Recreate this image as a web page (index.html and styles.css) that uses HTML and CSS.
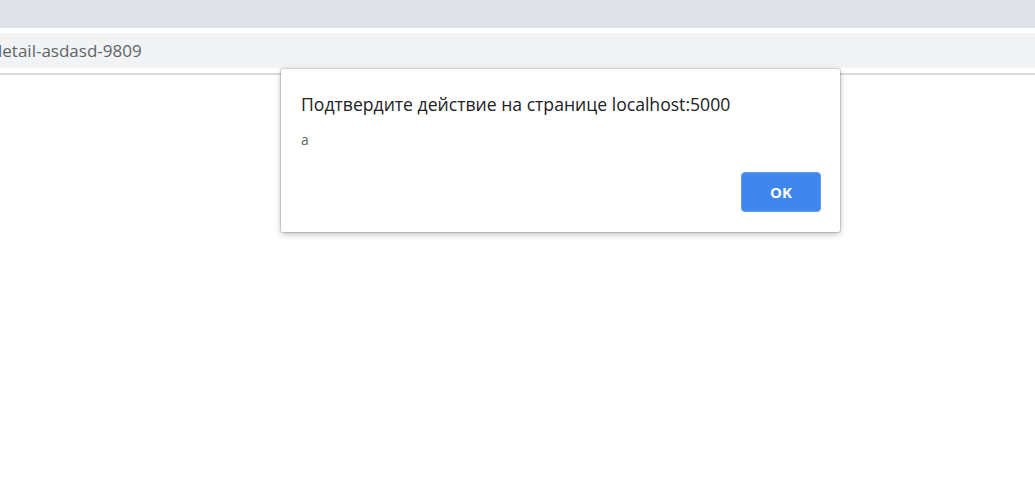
FILE: index.html
```html
<!DOCTYPE html>
<html lang="ru">
<head>
  <meta charset="UTF-8">
  <title>localhost:5000</title>
  <link rel="stylesheet" href="styles.css">
</head>
<body>
  <div class="tabstrip"></div>
  <div class="toolbar">
    <div class="omnibox">letail-asdasd-9809</div>
  </div>
  <div class="page">
    <div class="dialog">
      <div class="dialog-title">Подтвердите действие на странице localhost:5000</div>
      <div class="dialog-message">a</div>
      <div class="dialog-buttons">
        <button class="ok-button">OK</button>
      </div>
    </div>
  </div>
</body>
</html>
```

FILE: styles.css
```css
body {
  margin: 0;
  padding: 0;
  font-family: 'Open Sans', 'Noto Sans', sans-serif;
  background: #fff;
  width: 1035px;
  height: 501px;
  overflow: hidden;
}

.tabstrip {
  height: 28px;
  background: #dee1e6;
}

.toolbar {
  background: #fff;
  padding: 5px 0;
  border-bottom: 2px solid #dadada;
}

.omnibox {
  height: 35px;
  background: #f1f3f4;
  font-size: 17px;
  line-height: 35px;
  color: #5f6368;
  margin-left: -2px;
}

.page {
  position: relative;
}

.dialog {
  position: absolute;
  left: 281px;
  top: -6px;
  width: 559px;
  height: 163px;
  box-sizing: border-box;
  background: #fff;
  border-radius: 2px;
  box-shadow: 0 0 0 1px rgba(0,0,0,0.12), 0 2px 6px rgba(0,0,0,0.28);
  padding: 24px 19px 20px 20px;
}

.dialog-title {
  font-size: 17.6px;
  color: #202124;
  line-height: 22px;
}

.dialog-message {
  font-size: 14px;
  color: #5f6368;
  margin-top: 16px;
  line-height: 18px;
}

.dialog-buttons {
  display: flex;
  justify-content: flex-end;
  margin-top: 23px;
}

.ok-button {
  width: 80px;
  height: 40px;
  background: #3f87ee;
  border: 1px solid #5d9cf2;
  border-radius: 4px;
  color: #fff;
  font-family: 'Open Sans', 'Noto Sans', sans-serif;
  font-weight: 700;
  font-size: 15px;
  cursor: pointer;
}
```
